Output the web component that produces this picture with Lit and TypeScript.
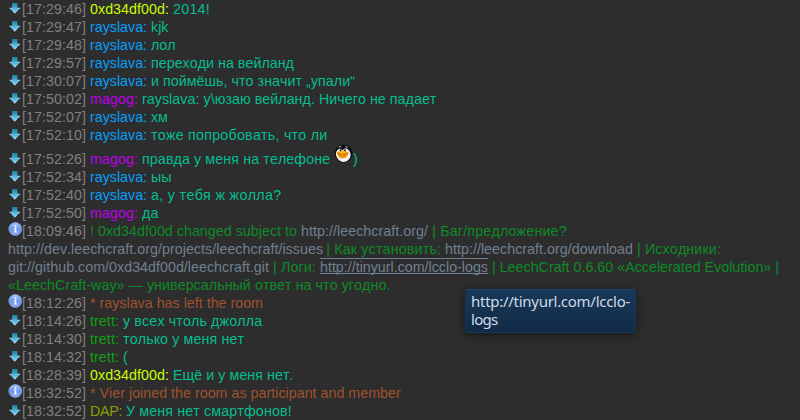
import { LitElement, html, css, svg } from "lit";
import { customElement, property } from "lit/decorators.js";
import { styleMap } from "lit/directives/style-map.js";

const CHAT_FONT = '15px "Liberation Sans"';
const TIP_FONT = '15px "Noto Sans"';
// Chat glyphs are drawn slightly condensed.
const SQUEEZE = 0.95;
const pen = document.createElement("canvas").getContext("2d")!;

// Tracking that makes a string advance by exactly `width` pixels.
const tracking = (text: string, width: number, font = CHAT_FONT) => {
  pen.font = font;
  return `${((width - pen.measureText(text).width) / text.length).toFixed(4)}px`;
};

type Run = [kind: string, text: string, width: number];
interface Entry {
  icon: "arrow" | "info";
  time: string;
  lines: Run[][];
  smiley?: boolean;
}

const ray: Run = ["ray", "rayslava: ", 61];
const magog: Run = ["magog", "magog: ", 52];
const trett: Run = ["trett", "trett: ", 33];
const oxd: Run = ["oxd", "0xd34df00d: ", 83];

const say = (time: string, who: Run, text: string, width: number, smiley = false): Entry => ({
  icon: "arrow", time, lines: [[who, ["msg", text, width]]], smiley,
});

const LOG: Entry[] = [
  say("17:29:46", oxd, "2014!", 37),
  say("17:29:47", ray, "kjk", 17.5),
  say("17:29:48", ray, "лол", 24.5),
  say("17:29:57", ray, "переходи на вейланд", 142),
  say("17:30:07", ray, "и поймёшь, что значит „упали“", 203.5),
  say("17:50:02", magog, "rayslava: у\\юзаю вейланд. Ничего не падает", 293.5),
  say("17:52:07", ray, "хм", 16.5),
  say("17:52:10", ray, "тоже попробовать, что ли", 175.5),
  say("17:52:26", magog, "правда у меня на телефоне ", 191.5, true),
  say("17:52:34", ray, "ыы", 20.5),
  say("17:52:40", ray, "а, у тебя ж жолла?", 129.5),
  say("17:52:50", magog, "да", 16.5),
  {
    icon: "info",
    time: "18:09:46",
    lines: [
      [["subject", "! 0xd34df00d changed subject to ", 211], ["link", "http://leechcraft.org/", 127], ["subject", " | Баг/предложение?", 138.5]],
      [["link", "http://dev.leechcraft.org/projects/leechcraft/issues", 314], ["subject", " | Как установить: ", 123], ["link", "http://leechcraft.org/download", 188], ["subject", " | Исходники:", 87.5]],
      [["link", "git://github.com/0xd34df00d/leechcraft.git", 261], ["subject", " | Логи: ", 51], ["link hover", "http://tinyurl.com/lcclo-logs", 168], ["subject", " | LeechCraft 0.6.60 «Accelerated Evolution» |", 291]],
      [["subject", "«LeechCraft-way» — универсальный ответ на что угодно.", 380.5]],
    ],
  },
  { icon: "info", time: "18:12:26", lines: [[["event", "* rayslava has left the room", 173]]] },
  say("18:14:26", trett, "у всех чтоль джолла", 138),
  say("18:14:30", trett, "только у меня нет", 120.5),
  say("18:14:32", trett, "(", 5),
  say("18:28:39", oxd, "Ещё и у меня нет.", 118.5),
  { icon: "info", time: "18:32:52", lines: [[["event", "* Vier joined the room as participant and member", 310.5]]] },
  say("18:32:52", ["dap", "DAP: ", 36], "У меня нет смартфонов!", 165),
];

const arrow = svg`
  <defs><linearGradient id="a" x1="0" y1="0" x2="0" y2="1">
    <stop offset="0" stop-color="#15809f"/><stop offset=".45" stop-color="#45abd2"/><stop offset="1" stop-color="#a5dcf2"/>
  </linearGradient></defs>
  <path d="M4.100 1h5.300v5h3L6.800 11.800 1.300 6h2.800z" fill="url(#a)"/>
  <path d="M1.500 6.200h3M9.100 6.200h3" stroke="#a8dff0" stroke-width=".8"/>`;

const info = svg`
  <defs><linearGradient id="i" x1="0" y1="0" x2="0" y2="1">
    <stop offset="0" stop-color="#a9c4fb"/><stop offset=".5" stop-color="#6f97ea"/><stop offset="1" stop-color="#86adf5"/>
  </linearGradient></defs>
  <circle cx="7.300" cy="7" r="6.500" fill="url(#i)" stroke="#8cabec" stroke-width=".6"/>
  <path d="M6.500 3h1.800v1.700H6.500zM6 5.600h2.300v4h.8v1H5.700v-1h.9v-3H6z" fill="#f4f8ff"/>`;

@customElement("chat-icon")
class ChatIcon extends LitElement {
  @property() kind = "arrow";
  static styles = css`
    :host { display: block; flex: none; width: 14px; height: 14px; }
    svg { display: block; width: 14px; height: 14px; }
  `;
  render() {
    return html`<svg viewBox="0 0 14 14">${this.kind === "info" ? info : arrow}</svg>`;
  }
}

@customElement("penguin-smiley")
class PenguinSmiley extends LitElement {
  static styles = css`
    :host { display: block; flex: none; width: 19px; height: 19px; }
    svg { display: block; }
  `;
  render() {
    return html`<svg width="19" height="19" viewBox="0 0 19 19">
      <circle cx="9.700" cy="9.500" r="8.800" fill="#080808"/>
      <path d="M1.800 9.500C2.200 7 4 5 5.500 4.700 7.500 4.300 8.500 6 9 6.500 9.500 5 11 4 12.500 4.500 15 5.500 16.500 8 16.700 11c-.3 4-3.500 7-7.200 7S2.100 14 1.800 9.500z" fill="#f5f5f5"/>
      <path d="M4.500 2.800l2.500-1 .5 1.200-2.500.7zM11.500 1.800l2.500 1.300-.5.8-2.300-.9z" fill="#999"/>
      <path d="M5.700 5.300h1.600v2H5.700zM10.200 5.300h1.600v2h-1.600z" fill="#111"/>
      <path d="M2.800 8.300c2-.6 3.500-1.500 5.700-1.500s4.500.7 6 1.500c-.2 3.700-2.500 6.200-5.900 6.200S3.300 11.800 2.800 8.300z" fill="#f49a0c"/>
      <path d="M4 9.200c2 1.400 2.500 2 4.700 2s3-.8 4.800-2" fill="none" stroke="#a35c00" stroke-width=".8"/>
      <path d="M6 8.500c1-.6 4-.6 5 0" fill="none" stroke="#ffc738"/>
    </svg>`;
  }
}

@customElement("app-root")
class AppRoot extends LitElement {
  static styles = css`
    :host {
      display: block;
      position: relative;
      width: 800px;
      height: 420px;
      overflow: hidden;
      background: #2d2d2d;
      font: 15px/18px "Liberation Sans", Arial, sans-serif;
      font-kerning: none;
      font-variant-ligatures: none;
      color: #808080;
    }
    .log { display: flex; flex-direction: column; padding-left: 8px; }
    .line { display: flex; height: 18px; white-space: pre; }
    .tall { height: 24px; align-items: flex-end; }
    .tall > penguin-smiley { align-self: flex-start; }
    .icon-arrow { margin-top: 2px; }
    .tall .icon-arrow { margin: 0 0 2px; }
    .run { display: block; height: 18px; flex: none; transform-origin: 0 0; }
    .msg { color: #05bd90; }
    .ray { color: #069ffa; }
    .magog { color: #bd00e8; }
    .trett { color: #0fa012; }
    .oxd { color: #c8fb05; }
    .dap { color: #8b9f00; }
    .subject { color: #0d8b28; }
    .link { color: #708090; }
    .event { color: #a0522d; }
    .hover { box-sizing: border-box; height: 16px; line-height: 16px; border: solid #708090; border-width: 1px 0; }
    .tip {
      position: absolute;
      left: 465px;
      top: 289px;
      box-sizing: border-box;
      width: 171px;
      height: 44px;
      padding: 2px 0 0 5px;
      border: 1px solid #15385c;
      border-top-color: #1d4870;
      border-radius: 4px;
      background: linear-gradient(#183858, #112b46);
      box-shadow: 0 2px 9px rgba(0, 0, 0, 0.5);
      color: #cfdbe8;
      font: 15px/18px "Noto Sans", "Open Sans", sans-serif;
      white-space: pre;
    }
    .tip-line { display: block; }
  `;

  private run([kind, text, width]: Run) {
    const full = width / SQUEEZE;
    return html`<span class="run ${kind}" style=${styleMap({
      width: `${full}px`,
      marginRight: `${width - full}px`,
      letterSpacing: tracking(text, full),
      transform: `scaleX(${SQUEEZE})`,
    })}>${text}</span>`;
  }

  private entry(e: Entry) {
    return e.lines.map((runs, i) => html`<div class="line ${e.smiley ? "tall" : ""}">${i === 0
      ? html`<chat-icon class="icon-${e.icon}" kind=${e.icon}></chat-icon>${this.run(["time", `[${e.time}] `, 68])}`
      : null}${runs.map((r) => this.run(r))}${e.smiley
      ? html`<penguin-smiley></penguin-smiley>${this.run(["msg", ")", 5])}`
      : null}</div>`);
  }

  render() {
    const tip: [string, number][] = [["http://tinyurl.com/lcclo-", 159], ["logs", 26.5]];
    return html`
      <div class="log">${LOG.map((e) => this.entry(e))}</div>
      <div class="tip">${tip.map(([t, w]) => html`<span class="tip-line" style=${styleMap({ letterSpacing: tracking(t, w, TIP_FONT) })}>${t}</span>`)}</div>
    `;
  }
}
